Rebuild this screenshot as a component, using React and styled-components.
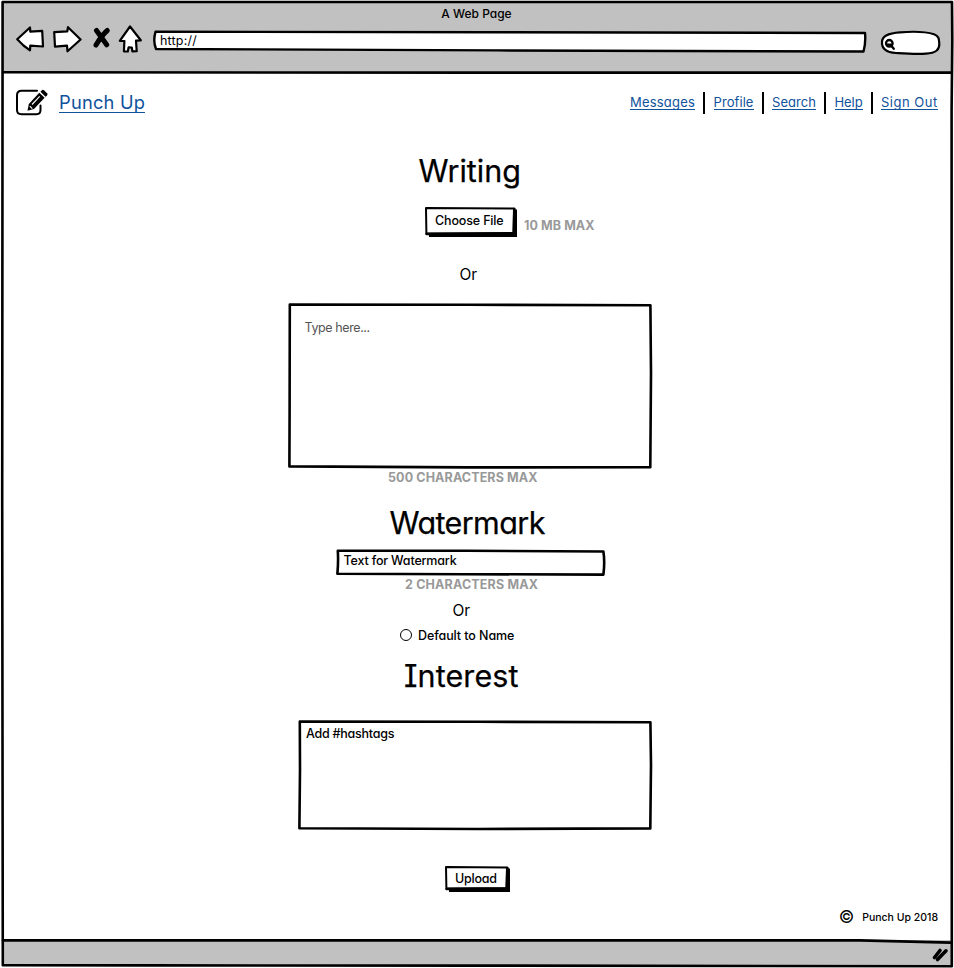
import React from 'react';
import styled, { createGlobalStyle } from 'styled-components';

const INK = '#000';
const CHROME = '#c1c1c1';
const LINK = '#10529c';

const GlobalStyle = createGlobalStyle`
  *, *::before, *::after { box-sizing: border-box; }
  html, body { margin: 0; background: #fff; }
  body {
    font-family: Inter, "Noto Sans", sans-serif;
    font-feature-settings: "cv11", "cv08";
    color: ${INK};
    overflow: hidden;
  }
`;

/* ---------- window ---------- */

const Window = styled.div`
  position: relative;
  display: flex;
  flex-direction: column;
  width: 954px;
  height: 968px;
  padding: 2px 2px 2px 3px;
`;

const Sketch = styled.svg`
  position: absolute;
  inset: 0;
  width: 100%;
  height: 100%;
  overflow: visible;
  pointer-events: none;
  fill: none;
  stroke: ${INK};
  stroke-width: ${(p) => p.$weight || 2.6}px;
  stroke-linejoin: round;
  stroke-linecap: round;
`;

const Chrome = styled.header`
  height: 70px;
  background: ${CHROME};
`;

const WindowTitle = styled.div`
  height: 23px;
  padding-right: 2px;
  font-size: 12px;
  font-weight: 450;
  line-height: 23px;
  text-align: center;
`;

const Toolbar = styled.div`
  display: flex;
  align-items: flex-start;
  height: 30px;
  padding: 0 10px 0 12px;
`;

const ToolIcon = styled.svg`
  flex: none;
  width: ${(p) => p.$w}px;
  height: 30px;
  margin-left: ${(p) => p.$gap || 0}px;
  overflow: visible;
  fill: #fff;
  stroke: ${INK};
  stroke-width: 2.2px;
  stroke-linejoin: round;
  stroke-linecap: round;
`;

const AddressBar = styled.div`
  position: relative;
  width: 713px;
  height: 22px;
  margin: 5px 0 0 10px;
`;

const AddressText = styled.span`
  position: relative;
  display: block;
  padding-left: 7px;
  font-size: 12.5px;
  line-height: 21px;
  letter-spacing: 0.2px;
`;

/* ---------- page ---------- */

const Page = styled.div`
  display: flex;
  flex-direction: column;
  flex: 1;
`;

const Masthead = styled.div`
  display: flex;
  align-items: center;
  justify-content: space-between;
  height: 56px;
  margin-top: 2px;
  padding: 0 14px 0 13px;
`;

const Brand = styled.div`
  display: flex;
  align-items: center;
`;

const BrandIcon = styled.svg`
  width: 32px;
  height: 28px;
  margin-right: 11px;
  overflow: visible;
`;

const Link = styled.a`
  display: block;
  width: ${(p) => p.$w}px;
  height: ${(p) => (p.$large ? 22 : 16)}px;
  line-height: ${(p) => (p.$large ? 22 : 16)}px;
  font-size: ${(p) => (p.$large ? 18.3 : 13)}px;
  letter-spacing: ${(p) => p.$track || 0}px;
  white-space: nowrap;
  color: ${LINK};
  box-shadow: inset 0 -1px 0 ${LINK};
`;

const Nav = styled.nav`
  display: flex;
  align-items: center;
  gap: 8.25px;
`;

const Separator = styled.span`
  width: 2px;
  height: 22px;
  margin-top: 1px;
  background: ${INK};
`;

const Form = styled.main`
  display: flex;
  flex-direction: column;
  align-items: flex-start;
  flex: 1;
  padding-left: 285px;
`;

const Heading = styled.h1`
  height: 40px;
  margin: ${(p) => p.$top}px 0 0 ${(p) => p.$indent}px;
  font-size: 30.5px;
  font-weight: 400;
  line-height: 40px;
  letter-spacing: ${(p) => p.$track || 0}px;
  white-space: nowrap;
  -webkit-text-stroke: 0.25px ${INK};
`;

const FileRow = styled.div`
  display: flex;
  margin: 16px 0 0 137px;
`;

const SketchButton = styled.button`
  position: relative;
  display: block;
  width: ${(p) => p.$w}px;
  height: ${(p) => p.$h}px;
  margin: ${(p) => p.$top || 0}px 0 0 ${(p) => p.$indent || 0}px;
  padding: 0;
  border: 0;
  background: none;
  color: inherit;
  font: inherit;
  font-feature-settings: inherit;
  text-align: left;
`;

const ButtonText = styled.span`
  position: relative;
  display: block;
  height: 100%;
  padding-left: 10px;
  font-size: 12.5px;
  font-weight: 450;
  line-height: ${(p) => p.$lh}px;
  letter-spacing: ${(p) => p.$track || 0}px;
  white-space: nowrap;
`;

const Hint = styled.div`
  height: 16px;
  margin: ${(p) => p.$top || 0}px 0 0 ${(p) => p.$indent || 0}px;
  font-size: 12.5px;
  font-weight: 650;
  line-height: 16px;
  letter-spacing: ${(p) => p.$track || 0}px;
  white-space: nowrap;
  color: #999;
`;

const Or = styled.div`
  height: 20px;
  margin: ${(p) => p.$top}px 0 0 ${(p) => p.$indent}px;
  font-size: 15.5px;
  line-height: 20px;
`;

const Field = styled.div`
  position: relative;
  width: ${(p) => p.$w}px;
  height: ${(p) => p.$h}px;
  margin: ${(p) => p.$top}px 0 0 ${(p) => p.$indent || 0}px;
`;

const FieldText = styled.span`
  position: relative;
  display: block;
  padding: ${(p) => p.$pt}px 0 0 ${(p) => p.$pl}px;
  font-size: 12.5px;
  font-weight: ${(p) => (p.$muted ? 400 : 450)};
  line-height: 16px;
  letter-spacing: ${(p) => p.$track || 0}px;
  color: ${(p) => (p.$muted ? '#555' : INK)};
`;

const RadioRow = styled.label`
  display: flex;
  align-items: center;
  gap: 6px;
  height: 16px;
  margin: 6px 0 0 112px;
  font-size: 12.5px;
  font-weight: 450;
  letter-spacing: -0.08px;
`;

const RadioMark = styled.span`
  width: 12px;
  height: 12px;
  border: 1.2px solid ${INK};
  border-radius: 50%;
`;

const Legal = styled.div`
  display: flex;
  align-items: center;
  justify-content: flex-end;
  gap: 8px;
  height: 20px;
  margin-bottom: 13px;
  padding-right: 14px;
  font-size: 10.5px;
  font-weight: 450;
`;

const CopyrightMark = styled.span`
  font-size: 17px;
  font-weight: 400;
  line-height: 20px;
`;

const StatusBar = styled.footer`
  display: flex;
  justify-content: flex-end;
  height: 26px;
  padding: 8px 3px 0 0;
  background: ${CHROME};
`;

const Grip = styled.svg`
  width: 17px;
  height: 14px;
  overflow: visible;
  stroke: ${INK};
  stroke-width: 3.6px;
  stroke-linecap: round;
  fill: none;
`;

/* ---------- composed parts ---------- */

function Button({ label, w, h, track, lh, ...place }) {
  return (
    <SketchButton $w={w} $h={h} $top={place.top} $indent={place.indent}>
      <Sketch $weight={2}>
        <path
          d={`M4 5H${w - 3}V2.5H${w}V${h}H4Z`}
          fill={INK}
          stroke="none"
        />
        <path
          d={`M1 1L${w - 3} 1.6L${w - 3.6} ${h - 4}L1.4 ${h - 3.6}Z`}
          fill="#fff"
        />
        <path d={`M1.6 ${h - 3}L${w - 3} ${h - 3.2}`} strokeWidth="2.6" />
        <path d={`M${w - 2.6} 2L${w - 3} ${h - 4}`} strokeWidth="2.6" />
      </Sketch>
      <ButtonText $lh={lh} $track={track}>{label}</ButtonText>
    </SketchButton>
  );
}

function NavIcons() {
  return (
    <>
      <ToolIcon $w={30} viewBox="15 23 30 30">
        <path d="M17.2 37.3L30 25.5L30.3 29.6L42.2 28.8L43 44.5L30.3 43.6L30 48.3L23.5 43.5Z" />
      </ToolIcon>
      <ToolIcon $w={30} $gap={7} viewBox="52 23 30 30">
        <path d="M54.2 30.2L67.3 29.3L68 25.2L80.6 37.5L67.5 49.3L67 43.6L55 44.6Z" />
      </ToolIcon>
      <ToolIcon $w={20} $gap={10} viewBox="92 23 20 30">
        <path d="M96.5 28.5L106.7 42.8M107.3 28.5C102 33 99 38 96 43" strokeWidth="5" fill="none" />
      </ToolIcon>
      <ToolIcon $w={25} $gap={6} viewBox="118 23 25 30">
        <path d="M130 24.5L140.8 38.3L136 38.7L136.7 49.2L132.4 49.3L131.8 45.5L128.6 45.4L127.8 49.5L123.9 49.4L124.4 39L119.8 38.8Z" />
      </ToolIcon>
    </>
  );
}

export default function App() {
  return (
    <>
      <GlobalStyle />
      <Window>
        <Chrome>
          <WindowTitle>A Web Page</WindowTitle>
          <Toolbar>
            <NavIcons />
            <AddressBar>
              <Sketch $weight={2.4}>
                <path
                  d="M2.5 1.8L345 2.2L712 3Q713 12 710.5 21.5L345 20.4L3 19Q-.2 11 2.5 1.8Z"
                  fill="#fff"
                />
              </Sketch>
              <AddressText>http://</AddressText>
            </AddressBar>
            <ToolIcon $w={60} $gap={14} viewBox="881 23 60 30">
              <path d="M883 40C883 34 890 31 901 30.3C914 29.3 928 30 935 32.2C940.5 34 940 38 940.3 42C940.5 48 937 51 927 51.6C917 52.4 905 51.5 897 51C887 50.5 882.5 46 883 40Z" />
              <circle cx="890.3" cy="41.3" r="3.3" strokeWidth="2.3" />
              <path d="M888.5 42.7H892M892.5 44L894.8 46.8" strokeWidth="2.3" />
            </ToolIcon>
          </Toolbar>
        </Chrome>

        <Page>
          <Masthead>
            <Brand>
              <BrandIcon viewBox="16 88 32 28">
                <path
                  d="M37 90.8H21.5Q17 90.8 17 95.3V110Q17 114.2 21.5 114.2H36.5Q40.5 114.2 40.5 110V105.5"
                  fill="none"
                  stroke={INK}
                  strokeWidth="2"
                  strokeLinecap="round"
                />
                <path d="M27.5 110.8L28.8 104L39.3 92.8L44.6 97.8L34 109Z" fill={INK} />
                <path d="M40.4 91.7L42.2 90Q43 89.5 44 90.3L47.3 93.6Q47.8 94.6 47 95.4L45.6 96.8Z" fill={INK} />
                <path d="M32 104.5L39.7 96.3M29.8 106.2L32.3 108.6" stroke="#fff" strokeWidth="1.1" />
              </BrandIcon>
              <Link $large $w={86} $track={0.2}>Punch Up</Link>
            </Brand>
            <Nav>
              <Link $w={65} $track={0.2}>Messages</Link>
              <Separator />
              <Link $w={40} $track={0.08}>Profile</Link>
              <Separator />
              <Link $w={44} $track={0.05}>Search</Link>
              <Separator />
              <Link $w={28} $track={-0.08}>Help</Link>
              <Separator />
              <Link $w={57} $track={0.5}>Sign Out</Link>
            </Nav>
          </Masthead>

          <Form>
            <Heading $top={21} $indent={130.5} $track={0}>Writing</Heading>
            <FileRow>
              <Button label="Choose File" w={92} h={30} lh={28} track={-0.15} />
              <Hint $top={11} $indent={7} $track={0.08}>10 MB MAX</Hint>
            </FileRow>
            <Or $top={28} $indent={171.5}>Or</Or>
            <Field $w={364} $h={166} $top={18}>
              <Sketch>
                <path d="M1.8 1.5L180 1.8L362.4 2.2L363 70L362.3 164.2L180 164.4L1.4 163.4L1.6 110Z" />
              </Sketch>
              <FieldText $muted $pt={17} $pl={16.5} $track={-0.4}>Type here...</FieldText>
            </Field>
            <Hint $top={1} $indent={100} $track={0.12}>500 CHARACTERS MAX</Hint>

            <Heading $top={17} $indent={101.5} $track={-0.6}>Watermark</Heading>
            <Field $w={269} $h={27} $top={6} $indent={48}>
              <Sketch>
                <path d="M1.8 1.8L130 1.8L267.4 2.5Q269 13 267.4 25.6L130 25.2L1.4 24.7Q2.5 12 1.8 1.8Z" />
              </Sketch>
              <FieldText $pt={4} $pl={7.5} $track={-0.17}>Text for Watermark</FieldText>
            </Field>
            <Hint $top={1} $indent={117} $track={0.16}>2 CHARACTERS MAX</Hint>
            <Or $top={8} $indent={164.5}>Or</Or>
            <RadioRow>
              <RadioMark />
              Default to Name
            </RadioRow>

            <Heading $top={13} $indent={116} $track={0.1}>Interest</Heading>
            <Field $w={354} $h={110} $top={24} $indent={10}>
              <Sketch>
                <path d="M1.8 1.5L180 1.8L352.4 2.2L353 45L352.3 108.4L180 109L1.4 108.2L2 50Z" />
              </Sketch>
              <FieldText $pt={6} $pl={8} $track={-0.25}>Add #hashtags</FieldText>
            </Field>
            <Button label="Upload" w={65} h={26} lh={25} top={36} indent={157} track={-0.25} />
          </Form>

          <Legal>
            <CopyrightMark>©</CopyrightMark>
            Punch Up 2018
          </Legal>
        </Page>

        <StatusBar>
          <Grip viewBox="932 949 17 14">
            <path d="M934.5 958.5L940 951.5M937.5 960.5L946 951.8" />
          </Grip>
        </StatusBar>

        <Sketch viewBox="0 0 954 968">
          <path d="M2.6 2L952 2L952.3 40L951.6 110L951.8 966.2L480 965.6L150 965.4L2.8 965.2L2.2 500Z" />
          <path d="M3 72.3L480 72.6L951 72.6" />
          <path d="M3 940.4L860 940.4L951 942.6" />
        </Sketch>
      </Window>
    </>
  );
}
